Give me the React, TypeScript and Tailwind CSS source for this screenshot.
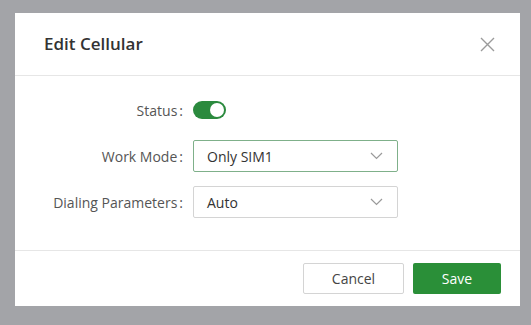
import React from "react";

const font = { fontFamily: '"Open Sans", "Noto Sans", Arial, sans-serif' };

function Chevron() {
  return (
    <svg width="13" height="8" viewBox="0 0 13 8" fill="none">
      <path d="M1 1l5.5 5.5L12 1" stroke="#9a9a9a" strokeWidth="1.2" />
    </svg>
  );
}

function Select({ value, focused }: { value: string; focused?: boolean }) {
  return (
    <div
      className={`flex h-[32px] w-[205px] items-center justify-between rounded-[2px] border bg-white pl-[13px] pr-[14px] text-[14px] text-[#333] ${
        focused ? "border-[#7fb08a]" : "border-[#d4d4d4]"
      }`}
    >
      <span>{value}</span>
      <Chevron />
    </div>
  );
}

function Row({ label, children }: { label: string; children: React.ReactNode }) {
  return (
    <div className="flex h-[32px] items-center">
      <div className="w-[169px] pr-[1px] text-right text-[14px] text-[#555]">
        {label}
        <span className="ml-[2px]">:</span>
      </div>
      <div className="ml-[9px] flex items-center">{children}</div>
    </div>
  );
}

export default function App() {
  return (
    <div className="h-[325px] w-[531px] bg-[#a3a4a8] pl-[15px] pt-[13px]" style={font}>
      <div className="flex h-[293px] w-[505px] flex-col bg-white">
        <div className="flex h-[63px] shrink-0 items-center justify-between border-b border-[#e6e6e6] pl-[29px] pr-[25px]">
          <h1 className="text-[17px] font-semibold text-[#333]">Edit Cellular</h1>
          <svg width="15" height="15" viewBox="0 0 15 15" fill="none">
            <path d="M1 1l13 13M14 1L1 14" stroke="#9b9b9b" strokeWidth="1.4" />
          </svg>
        </div>

        <div className="flex flex-1 flex-col gap-[14px] pt-[18px]">
          <Row label="Status">
            <div className="flex h-[18px] w-[33px] items-center justify-end rounded-full bg-[#2b8a3e] pr-[2px]">
              <div className="h-[14px] w-[14px] rounded-full bg-white" />
            </div>
          </Row>
          <Row label="Work Mode">
            <Select value="Only SIM1" focused />
          </Row>
          <Row label="Dialing Parameters">
            <Select value="Auto" />
          </Row>
        </div>

        <div className="flex h-[56px] shrink-0 items-start justify-end gap-[9px] border-t border-[#e6e6e6] pr-[19px] pt-[12px]">
          <button className="h-[31px] w-[101px] rounded-[2px] border border-[#d4d4d4] bg-white text-[14px] text-[#444]">
            Cancel
          </button>
          <button className="h-[31px] w-[88px] rounded-[2px] bg-[#2a8f38] text-[14px] text-white">
            Save
          </button>
        </div>
      </div>
    </div>
  );
}
